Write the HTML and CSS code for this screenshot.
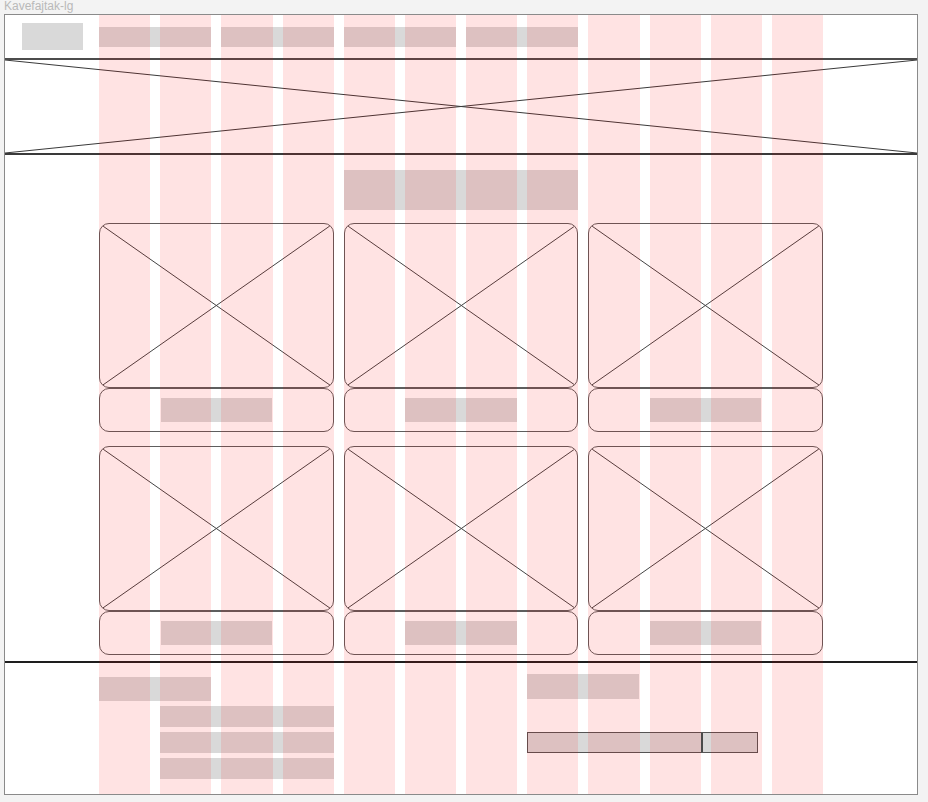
FILE: index.html
```html
<!DOCTYPE html>
<html>
<head>
<meta charset="utf-8">
<title>Kavefajtak-lg</title>
<link rel="stylesheet" href="styles.css">
</head>
<body>
<div class="label">Kavefajtak-lg</div>
<div class="frame">
  <header class="header">
    <div class="ph logo"></div>
    <nav class="grid nav">
      <div class="ph nav-item"></div>
      <div class="ph nav-item"></div>
      <div class="ph nav-item"></div>
      <div class="ph nav-item"></div>
    </nav>
  </header>

  <section class="hero">
    <svg class="xsvg" viewBox="0 0 100 100" preserveAspectRatio="none">
      <line x1="0" y1="0" x2="100" y2="100" vector-effect="non-scaling-stroke"/>
      <line x1="0" y1="100" x2="100" y2="0" vector-effect="non-scaling-stroke"/>
    </svg>
  </section>

  <main class="main">
    <div class="grid">
      <div class="ph title"></div>
    </div>
    <div class="grid cards">
      <div class="card">
        <div class="card-img"><svg class="xsvg" viewBox="0 0 100 100" preserveAspectRatio="none"><line x1="0" y1="0" x2="100" y2="100" vector-effect="non-scaling-stroke"/><line x1="0" y1="100" x2="100" y2="0" vector-effect="non-scaling-stroke"/></svg></div>
        <div class="card-cap"><div class="ph cap-ph"></div></div>
      </div>
      <div class="card">
        <div class="card-img"><svg class="xsvg" viewBox="0 0 100 100" preserveAspectRatio="none"><line x1="0" y1="0" x2="100" y2="100" vector-effect="non-scaling-stroke"/><line x1="0" y1="100" x2="100" y2="0" vector-effect="non-scaling-stroke"/></svg></div>
        <div class="card-cap"><div class="ph cap-ph"></div></div>
      </div>
      <div class="card">
        <div class="card-img"><svg class="xsvg" viewBox="0 0 100 100" preserveAspectRatio="none"><line x1="0" y1="0" x2="100" y2="100" vector-effect="non-scaling-stroke"/><line x1="0" y1="100" x2="100" y2="0" vector-effect="non-scaling-stroke"/></svg></div>
        <div class="card-cap"><div class="ph cap-ph"></div></div>
      </div>
      <div class="card">
        <div class="card-img"><svg class="xsvg" viewBox="0 0 100 100" preserveAspectRatio="none"><line x1="0" y1="0" x2="100" y2="100" vector-effect="non-scaling-stroke"/><line x1="0" y1="100" x2="100" y2="0" vector-effect="non-scaling-stroke"/></svg></div>
        <div class="card-cap"><div class="ph cap-ph"></div></div>
      </div>
      <div class="card">
        <div class="card-img"><svg class="xsvg" viewBox="0 0 100 100" preserveAspectRatio="none"><line x1="0" y1="0" x2="100" y2="100" vector-effect="non-scaling-stroke"/><line x1="0" y1="100" x2="100" y2="0" vector-effect="non-scaling-stroke"/></svg></div>
        <div class="card-cap"><div class="ph cap-ph"></div></div>
      </div>
      <div class="card">
        <div class="card-img"><svg class="xsvg" viewBox="0 0 100 100" preserveAspectRatio="none"><line x1="0" y1="0" x2="100" y2="100" vector-effect="non-scaling-stroke"/><line x1="0" y1="100" x2="100" y2="0" vector-effect="non-scaling-stroke"/></svg></div>
        <div class="card-cap"><div class="ph cap-ph"></div></div>
      </div>
    </div>
  </main>

  <footer class="footer">
    <div class="grid">
      <div class="f-left">
        <div class="ph f-head"></div>
        <div class="ph f-link"></div>
        <div class="ph f-link"></div>
        <div class="ph f-link"></div>
      </div>
      <div class="f-right">
        <div class="ph f-rhead"></div>
        <div class="f-input">
          <div class="f-field"></div>
          <div class="f-btn"></div>
        </div>
      </div>
    </div>
  </footer>

  <div class="grid overlay">
    <span></span><span></span><span></span><span></span>
    <span></span><span></span><span></span><span></span>
    <span></span><span></span><span></span><span></span>
  </div>
</div>
</body>
</html>
```

FILE: styles.css
```css
* { box-sizing: border-box; }

body {
  margin: 0;
  background: #f3f3f3;
  font-family: "Liberation Sans", Arial, sans-serif;
}

.label {
  height: 14px;
  padding-left: 4px;
  font-size: 12px;
  line-height: 13px;
  color: #b9b9b9;
}

.frame {
  position: relative;
  margin-left: 4px;
  width: 914px;
  height: 781px;
  border: 1px solid #8a8a8a;
  background: #ffffff;
}

.grid {
  width: 724px;
  margin: 0 auto;
  display: grid;
  grid-template-columns: repeat(12, minmax(0, 1fr));
  column-gap: 10px;
}

.ph { background: #d9d9d9; }

/* header */
.header {
  height: 43px;
  display: grid;
  grid-template-columns: 94px 724px 94px;
  align-items: start;
}
.logo {
  width: 61px;
  height: 27px;
  margin: 8px 0 0 17px;
}
.nav {
  width: auto;
  margin: 12px 0 0;
}
.nav-item {
  grid-column: span 2;
  height: 20px;
}

/* hero */
.hero {
  height: 97px;
  border-top: 2px solid #4c4c4c;
  border-bottom: 2px solid #3a3a3a;
}
.xsvg {
  display: block;
  width: 100%;
  height: 100%;
}
.xsvg line {
  stroke: #3a3a3a;
  stroke-width: 1;
}

/* main */
.main {
  height: 506px;
  padding-top: 15px;
}
.title {
  grid-column: 5 / 9;
  height: 40px;
}
.cards {
  margin-top: 13px;
  row-gap: 14px;
}
.card {
  grid-column: span 4;
  display: flex;
  flex-direction: column;
}
.card-img {
  height: 165px;
  border: 1px solid #5e5e5e;
  border-radius: 10px;
  overflow: hidden;
}
.card-img .xsvg line { stroke: #444; }
.card-cap {
  height: 44px;
  border: 1px solid #5e5e5e;
  border-radius: 10px;
  display: grid;
  grid-template-columns: repeat(4, minmax(0, 1fr));
  column-gap: 10px;
  align-items: center;
  padding: 0 0 1px;
}
.cap-ph {
  grid-column: 2 / 4;
  height: 24px;
}

/* footer */
.footer {
  height: 131px;
  border-top: 2px solid #1e1e1e;
}
.f-left {
  grid-column: 1 / 5;
  display: grid;
  grid-template-columns: repeat(4, minmax(0, 1fr));
  column-gap: 10px;
  row-gap: 5px;
  padding-top: 14px;
  align-content: start;
}
.f-head {
  grid-column: 1 / 3;
  height: 24px;
}
.f-link {
  grid-column: 2 / 5;
  height: 21px;
}
.f-right {
  grid-column: 8 / 12;
  display: grid;
  grid-template-columns: repeat(4, minmax(0, 1fr));
  column-gap: 10px;
  padding-top: 11px;
  align-content: start;
}
.f-rhead {
  grid-column: 1 / 3;
  height: 25px;
}
.f-input {
  grid-column: 1 / 5;
  margin: 33px 4px 0 0;
  height: 21px;
  border: 1px solid #555;
  background: #d9d9d9;
  display: flex;
}
.f-field { flex: 1; }
.f-btn {
  width: 56px;
  border-left: 2px solid #4a4a4a;
}

/* column overlay */
.overlay {
  position: absolute;
  top: 0;
  bottom: 0;
  left: 94px;
  pointer-events: none;
}
.overlay span {
  background: rgba(255, 0, 0, 0.11);
}
```
